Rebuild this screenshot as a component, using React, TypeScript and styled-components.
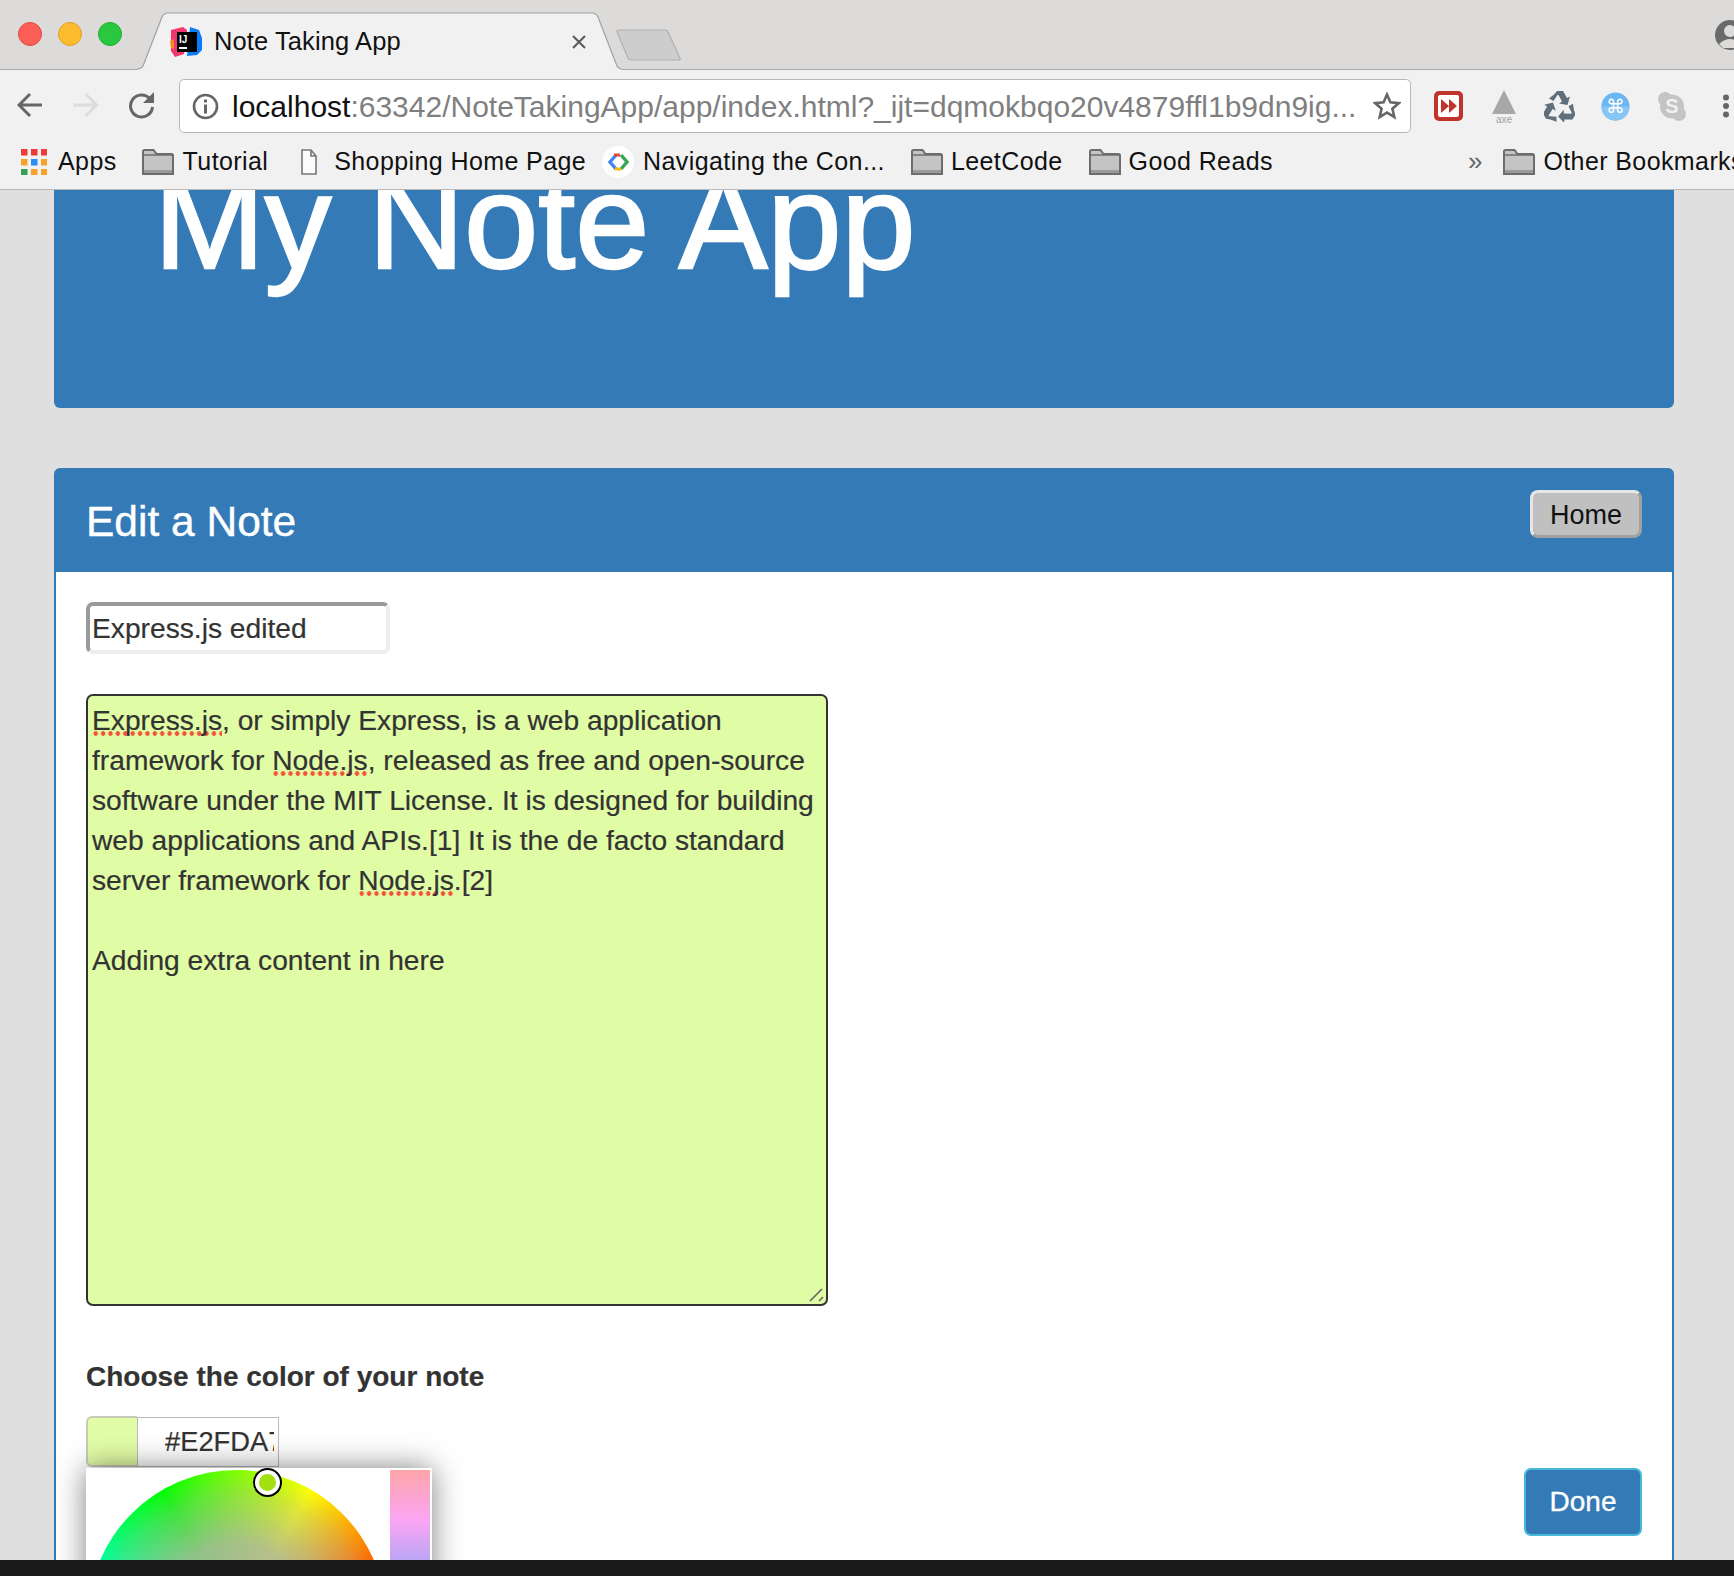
import * as React from 'react'
import styled, {createGlobalStyle} from 'styled-components'

const Global = createGlobalStyle`
  html, body {
    margin: 0;
    padding: 0;
    background: #dfdfdf;
  }
  * {
    box-sizing: border-box;
  }
`

const Window = styled.div`
  width: 1734px;
  height: 1576px;
  display: flex;
  flex-direction: column;
  overflow: hidden;
  font-family: "Liberation Sans", Arial, sans-serif;
  color: #333;
`

const TabStrip = styled.header`
  height: 70px;
  flex: none;
  display: flex;
  align-items: flex-start;
  background: #dcdbd9;
  border-bottom: 1px solid #a8a8a8;
  position: relative;
`

const Lights = styled.div`
  display: flex;
  gap: 16px;
  padding: 22px 0 0 18px;
  width: 138px;
  flex: none;
`

const Light = styled.span<{$fill: string; $edge: string}>`
  width: 24px;
  height: 24px;
  border-radius: 50%;
  background: ${(p) => p.$fill};
  border: 1px solid ${(p) => p.$edge};
`

const Tab = styled.div`
  position: relative;
  width: 483px;
  height: 70px;
  flex: none;
  display: flex;
  align-items: center;
  padding: 13px 0 0 32px;
`

const TabShape = styled.svg`
  position: absolute;
  left: 0;
  top: 0;
`

const Favicon = styled.svg`
  position: relative;
  flex: none;
  margin-right: 12px;
`

const TabTitle = styled.span`
  position: relative;
  font-size: 25.5px;
  letter-spacing: 0.1px;
  color: #111;
  width: 358px;
`

const CloseIcon = styled.svg`
  position: relative;
  flex: none;
`

const NewTab = styled.svg`
  flex: none;
  margin: 29px 0 0 -5px;
`

const Avatar = styled.svg`
  position: absolute;
  left: 1715px;
  top: 20px;
`

const Toolbar = styled.div`
  height: 70px;
  flex: none;
  background: #f1f1f1;
  display: flex;
  align-items: center;
  padding-left: 17px;
`

const NavButtons = styled.div`
  width: 162px;
  flex: none;
  display: flex;
  align-items: center;
  gap: 29px;
`

const UrlBox = styled.div`
  width: 1232px;
  height: 54px;
  flex: none;
  margin-top: 2px;
  background: #fff;
  border: 1px solid #b8b8b8;
  border-radius: 5px;
  display: flex;
  align-items: center;
  padding: 0 9px 0 12px;
`

const UrlText = styled.div`
  flex: 1;
  font-size: 30px;
  line-height: 36px;
  padding-top: 2px;
  margin-left: 13px;
  color: #7f7f7f;
  white-space: nowrap;
  overflow: hidden;
  b {
    font-weight: 400;
    color: #111;
  }
`

const Extensions = styled.div`
  flex: 1;
  display: flex;
  align-items: center;
  padding-left: 22px;
  margin-top: 2px;
  svg {
    flex: none;
  }
`

const ExtSlot = styled.div<{$width: number}>`
  width: ${(p) => p.$width}px;
  flex: none;
  display: flex;
`

const Bookmarks = styled.nav`
  height: 50px;
  flex: none;
  background: #f1f1f1;
  border-bottom: 1px solid #b9b9b9;
  display: flex;
  align-items: center;
  padding-bottom: 6px;
  font-size: 25px;
  color: #111;
  white-space: nowrap;
`

const Mark = styled.div<{$left: number; $gap: number}>`
  display: flex;
  align-items: center;
  gap: ${(p) => p.$gap}px;
  margin-left: ${(p) => p.$left}px;
  letter-spacing: 0.4px;
  flex: none;
`

const Chevrons = styled.span`
  margin-left: 195px;
  color: #666;
  font-size: 26px;
`

const Page = styled.main`
  flex: 1;
  min-height: 0;
  overflow: hidden;
  background: #dfdfdf;
  padding: 0 60px 0 54px;
`

const Jumbotron = styled.section`
  height: 218px;
  background: #337ab7;
  border-radius: 0 0 6px 6px;
  overflow: hidden;
  padding-left: 100px;
  margin-bottom: 60px;
`

const AppTitle = styled.h1`
  margin: -41px 0 0;
  font-size: 133px;
  line-height: 1.1;
  font-weight: 500;
  color: #fff;
  -webkit-text-stroke: 2.4px #fff;
`

const Panel = styled.section`
  background: #fff;
  border: 2px solid #337ab7;
  border-radius: 6px 6px 0 0;
  min-height: 1200px;
`

const PanelHeader = styled.div`
  height: 102px;
  background: #337ab7;
  display: flex;
  justify-content: space-between;
  align-items: flex-start;
  padding: 20px 30px 0;
`

const PanelTitle = styled.h2`
  margin: 9px 0 0;
  font-size: 42.5px;
  line-height: 1.1;
  font-weight: 500;
  color: #fff;
  -webkit-text-stroke: 0.4px #fff;
`

const HomeButton = styled.button`
  width: 112px;
  height: 48px;
  font: 27px "Liberation Sans", Arial, sans-serif;
  color: #111;
  background: #c0c0c0;
  border: 3px solid;
  border-color: #e6e6e6 #a0a0a0 #a0a0a0 #e6e6e6;
  border-radius: 8px;
  padding: 2px 0 0;
`

const PanelBody = styled.div`
  padding: 30px 30px 0;
  font-size: 28.2px;
  line-height: 40px;
  -webkit-text-stroke: 0.2px #333;
`

const TitleField = styled.div`
  width: 304px;
  height: 52px;
  border: 4px solid;
  border-color: #9a9a9a #eeeeee #eeeeee #9a9a9a;
  border-radius: 7px;
  padding-left: 2px;
  line-height: 45px;
  margin-bottom: 40px;
`

const NoteArea = styled.div`
  position: relative;
  width: 742px;
  height: 612px;
  background: #e0fda5;
  border: 2px solid #333;
  border-radius: 7px;
  padding: 4px;
  white-space: nowrap;
`

const NoteLine = styled.div`
  height: 40px;
`

const Misspelled = styled.span`
  background-image: radial-gradient(circle at center, #f4553a 0, #f4553a 2px, transparent 2.6px);
  background-size: 7.4px 5px;
  background-repeat: repeat-x;
  background-position: 0 100%;
`

const Grip = styled.svg`
  position: absolute;
  right: 0;
  bottom: 0;
`

const ColorLabel = styled.label`
  display: block;
  margin: 51px 0 19px;
  font-size: 28px;
  font-weight: 700;
`

const ColorRow = styled.div`
  display: flex;
  justify-content: space-between;
  align-items: flex-start;
`

const ColorField = styled.div`
  position: relative;
  width: 346px;
`

const ColorInputs = styled.div`
  display: flex;
  height: 52px;
`

const Swatch = styled.div`
  width: 51px;
  height: 51px;
  background: #e2fda7;
  border: 2px solid #c8cbb8;
  border-right: none;
  border-radius: 6px 0 0 6px;
`

const HexField = styled.div`
  width: 142px;
  height: 50px;
  margin-top: 1px;
  background: #fff;
  border: 1px solid #bbb;
  padding: 0 4px 0 27px;
  font-size: 27.3px;
  line-height: 48px;
`

const HexClip = styled.div`
  overflow: hidden;
  white-space: nowrap;
`

const Popover = styled.div`
  position: relative;
  display: flex;
  gap: 4px;
  padding: 2px;
  width: 346px;
  background: #fff;
  box-shadow: 0 0 28px rgba(0, 0, 0, 0.5);
`

const Wheel = styled.div`
  position: relative;
  width: 298px;
  height: 298px;
  border-radius: 50%;
  flex: none;
  background:
    radial-gradient(circle closest-side, rgba(172, 182, 160, 1) 0, rgba(172, 182, 160, 0.85) 50%, rgba(172, 182, 160, 0.32) 85%, rgba(172, 182, 160, 0) 100%),
    conic-gradient(from 90deg, #f00, #f0f, #00f, #0ff, #0f0, #ff0, #f00);
`

const WheelHandle = styled.span`
  position: absolute;
  left: 166px;
  top: -1px;
  width: 27px;
  height: 27px;
  border-radius: 50%;
  background: #a2e010;
  border: 5px solid #fff;
  outline: 2px solid #000;
  outline-offset: -1px;
`

const HueBar = styled.div`
  width: 40px;
  height: 298px;
  flex: none;
  background: linear-gradient(#fda5a8 0, #fba5f4 50px, #b8a5f5 92px, #a5d0f5 170px);
`

const DoneButton = styled.button`
  width: 118px;
  height: 68px;
  margin-top: 52px;
  background: #337ab7;
  border: 2px solid #46b8da;
  border-radius: 7px;
  color: #fff;
  font: 28px "Liberation Sans", Arial, sans-serif;
  -webkit-text-stroke: 0.3px #fff;
  padding: 0;
`

const BottomBar = styled.div`
  height: 16px;
  flex: none;
  background: #191919;
`

const Folder = () => (
  <svg width="32" height="26" viewBox="0 0 32 26">
    <path d="M1 25V2.500Q1 1 2.500 1h9l3 4h15Q31 5 31 6.500V25z" fill="#c4c4c4" stroke="#6d6d6d" strokeWidth="2" />
    <path d="M2 6h28" stroke="#6d6d6d" strokeWidth="1.5" />
    <rect x="2" y="21" width="28" height="3" fill="#9a9a9a" />
  </svg>
)

const AppsGrid = () => {
  const colors = ['#ef3b36', '#ef3b36', '#ef3b36', '#f4a328', '#2f8df0', '#f4a328', '#34a256', '#f4a328', '#f4a328']
  return (
    <svg width="26" height="26" viewBox="0 0 26 26">
      {colors.map((c, i) => (
        <rect key={i} x={(i % 3) * 10} y={Math.floor(i / 3) * 10} width="6.5" height="6.5" fill={c} />
      ))}
    </svg>
  )
}

const DocIcon = () => (
  <svg width="16" height="26" viewBox="0 0 16 26">
    <path d="M1 1h9l5 6v18H1z M10 1v6h5" fill="#fbfbfb" stroke="#777" strokeWidth="1.6" />
  </svg>
)

const GoogleDots = () => (
  <svg width="32" height="32" viewBox="0 0 32 32">
    <circle cx="16" cy="16" r="16" fill="#fff" />
    <path d="M14 9l-6 7 6 7" fill="none" stroke="#4285f4" strokeWidth="3.4" />
    <path d="M12 9h6" stroke="#ea4335" strokeWidth="3" />
    <path d="M19 9l6 7-6 7" fill="none" stroke="#34a853" strokeWidth="3.4" />
    <path d="M13 23h6" stroke="#fbbc05" strokeWidth="3" />
  </svg>
)

const RecycleIcon = () => (
  <svg width="31" height="32" viewBox="0 0 31 32">
    {[0, 120, 240].map((angle) => (
      <path
        key={angle}
        transform={`rotate(${angle} 15.5 18)`}
        d="M10 4.500L13 1h6l4 7 3-1.500-2.500 8.500-8.500-1.500 3-2-3.500-6.500h-1L9.500 11 5 8.500z"
        fill="#5f6f7c"
      />
    ))}
  </svg>
)

export default function App() {
  return (
    <Window>
      <Global />
      <TabStrip>
        <Lights>
          <Light $fill="#fc5f57" $edge="#e2463f" />
          <Light $fill="#fdbc2e" $edge="#e0a028" />
          <Light $fill="#29c83f" $edge="#20ac2e" />
        </Lights>
        <Tab>
          <TabShape width="483" height="70" viewBox="0 0 483 70">
            <path d="M0 70 L1 69 Q4 68 5 66 L24 17 Q26 13 30 13 L454 13 Q458 13 460 17 L479 66 Q480 68 483 69 L483 70z" fill="#f1f1f1" />
            <path d="M0 69 Q4 68 5 66 L24 17 Q26 13 30 13 L454 13 Q458 13 460 17 L479 66 Q480 68 483 69" fill="none" stroke="#a0a0a0" strokeWidth="1.2" />
          </TabShape>
          <Favicon width="32" height="32" viewBox="0 0 32 32">
            <path d="M1 4l12-3 4 3-3 24-9 3-4-6z" fill="#f0376f" />
            <path d="M0 15l4-2v10l-3-1z" fill="#f58b1f" />
            <path d="M20 1l9 3 3 8v12l-5 5-10 1z" fill="#087cfa" />
            <rect x="7" y="6" width="20" height="20" fill="#000" />
            <text x="9" y="17" fontSize="10" fontWeight="700" fill="#fff" fontFamily="Liberation Sans">IJ</text>
            <rect x="9" y="21" width="8" height="2" fill="#fff" />
          </Favicon>
          <TabTitle>Note Taking App</TabTitle>
          <CloseIcon width="14" height="14" viewBox="0 0 14 14">
            <path d="M1 1l12 12M13 1L1 13" stroke="#5a5a5a" strokeWidth="2" />
          </CloseIcon>
        </Tab>
        <NewTab width="66" height="32" viewBox="0 0 66 32">
          <path d="M1 3Q1 1 3 1h46q2 0 3 2l12 26q1 2-2 2H16q-3 0-4-2z" fill="#cdcdcd" stroke="#b0b0b0" strokeWidth="1.2" />
        </NewTab>
        <Avatar width="32" height="32" viewBox="0 0 32 32">
          <circle cx="15" cy="15" r="15" fill="#6a6a6a" />
          <circle cx="15" cy="11" r="6" fill="#dcdbd9" />
          <path d="M4 24q11-10 22 0l-4 4H8z" fill="#dcdbd9" />
        </Avatar>
      </TabStrip>

      <Toolbar>
        <NavButtons>
          <svg width="26" height="26" viewBox="0 0 26 26">
            <path d="M25 13H3M13 2L2 13l11 11" fill="none" stroke="#666" strokeWidth="3" />
          </svg>
          <svg width="27" height="26" viewBox="0 0 26 26">
            <path d="M1 13h22M13 2l11 11-11 11" fill="none" stroke="#dcdcdc" strokeWidth="3" />
          </svg>
          <svg width="27" height="28" viewBox="0 0 27 28">
            <path d="M22 8a11 11 0 1 0 2.500 8" fill="none" stroke="#666" strokeWidth="3" />
            <path d="M26 1v11H15z" fill="#666" />
          </svg>
        </NavButtons>
        <UrlBox>
          <svg width="27" height="27" viewBox="0 0 27 27" style={{flex: 'none'}}>
            <circle cx="13.500" cy="13.500" r="11.500" fill="none" stroke="#666" strokeWidth="2.600" />
            <rect x="12" y="11.500" width="3" height="9" fill="#666" />
            <rect x="12" y="6.500" width="3" height="3" fill="#666" />
          </svg>
          <UrlText><b>localhost</b>:63342/NoteTakingApp/app/index.html?_ijt=dqmokbqo20v4879ffl1b9dn9ig...</UrlText>
          <svg width="28" height="28" viewBox="0 0 28 28" style={{flex: 'none', marginLeft: 13}}>
            <path d="M14 2.500l3.400 7.800 8.400.8-6.400 5.600 1.900 8.300L14 20.600 6.700 25l1.900-8.300L2.200 11.100l8.400-.8z" fill="none" stroke="#666" strokeWidth="2.600" />
          </svg>
        </UrlBox>
        <Extensions>
          <ExtSlot $width={58}>
            <svg width="31" height="32" viewBox="0 0 31 32">
              <rect x="1" y="1" width="29" height="30" rx="5" fill="#c0342b" />
              <rect x="5" y="5" width="21" height="22" rx="2" fill="#fff" />
              <path d="M8 9l8 7-8 7zM16 9l8 7-8 7z" fill="#c0342b" />
            </svg>
          </ExtSlot>
          <ExtSlot $width={53}>
            <svg width="26" height="33" viewBox="0 0 26 33">
              <path d="M13 0l12 24H1z" fill="#a8a8a8" />
              <text x="13" y="33" fontSize="10" fill="#a0a0a0" textAnchor="middle" fontFamily="Liberation Sans">axe</text>
            </svg>
          </ExtSlot>
          <ExtSlot $width={57}>
            <RecycleIcon />
          </ExtSlot>
          <ExtSlot $width={56}>
            <svg width="29" height="29" viewBox="0 0 29 29">
              <circle cx="14.500" cy="14.500" r="14" fill="#6cb6f2" />
              <path d="M0.500 14.500h28a14 14 0 0 1-28 0z" fill="#87c6f5" />
              <text x="14.500" y="21" fontSize="19" fill="#fff" textAnchor="middle" fontFamily="DejaVu Sans">⌘</text>
            </svg>
          </ExtSlot>
          <ExtSlot $width={65}>
            <svg width="30" height="31" viewBox="0 0 30 31">
              <circle cx="15" cy="15.500" r="12" fill="#c4c4c4" />
              <circle cx="8" cy="8" r="7" fill="#c4c4c4" />
              <circle cx="22" cy="23" r="7" fill="#c4c4c4" />
              <text x="15" y="22" fontSize="20" fontWeight="700" fill="#f1f1f1" textAnchor="middle" fontFamily="Liberation Sans">S</text>
            </svg>
          </ExtSlot>
          <svg width="8" height="24" viewBox="0 0 8 24">
            <circle cx="4" cy="3.500" r="3" fill="#666" />
            <circle cx="4" cy="12" r="3" fill="#666" />
            <circle cx="4" cy="20.500" r="3" fill="#666" />
          </svg>
        </Extensions>
      </Toolbar>

      <Bookmarks>
        <Mark $left={21} $gap={11}><AppsGrid />Apps</Mark>
        <Mark $left={25} $gap={9}><Folder />Tutorial</Mark>
        <Mark $left={33} $gap={17}><DocIcon />Shopping Home Page</Mark>
        <Mark $left={16} $gap={9}><GoogleDots />Navigating the Con...</Mark>
        <Mark $left={26} $gap={8}><Folder />LeetCode</Mark>
        <Mark $left={26} $gap={8}><Folder />Good Reads</Mark>
        <Chevrons>»</Chevrons>
        <Mark $left={21} $gap={8}><Folder />Other Bookmarks</Mark>
      </Bookmarks>

      <Page>
        <Jumbotron>
          <AppTitle>My Note App</AppTitle>
        </Jumbotron>
        <Panel>
          <PanelHeader>
            <PanelTitle>Edit a Note</PanelTitle>
            <HomeButton>Home</HomeButton>
          </PanelHeader>
          <PanelBody>
            <TitleField>Express.js edited</TitleField>
            <NoteArea>
              <NoteLine><Misspelled>Express.js</Misspelled>, or simply Express, is a web application</NoteLine>
              <NoteLine>framework for <Misspelled>Node.js</Misspelled>, released as free and open-source</NoteLine>
              <NoteLine>software under the MIT License. It is designed for building</NoteLine>
              <NoteLine>web applications and APIs.[1] It is the de facto standard</NoteLine>
              <NoteLine>server framework for <Misspelled>Node.js</Misspelled>.[2]</NoteLine>
              <NoteLine />
              <NoteLine>Adding extra content in here</NoteLine>
              <Grip width="20" height="20" viewBox="0 0 20 20">
                <path d="M4 17L16 5M13 17l4-4" stroke="#666" strokeWidth="1.6" />
              </Grip>
            </NoteArea>
            <ColorLabel>Choose the color of your note</ColorLabel>
            <ColorRow>
              <ColorField>
                <ColorInputs>
                  <Swatch />
                  <HexField><HexClip>#E2FDA7</HexClip></HexField>
                </ColorInputs>
                <Popover>
                  <Wheel><WheelHandle /></Wheel>
                  <HueBar />
                </Popover>
              </ColorField>
              <DoneButton>Done</DoneButton>
            </ColorRow>
          </PanelBody>
        </Panel>
      </Page>
      <BottomBar />
    </Window>
  )
}
